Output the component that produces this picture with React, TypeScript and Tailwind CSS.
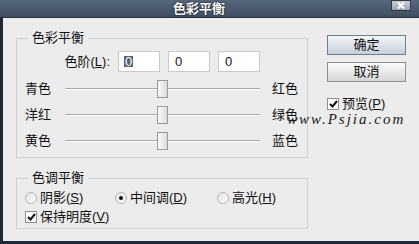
const SLIDERS = [
  { left: '青色', right: '红色' },
  { left: '洋红', right: '绿色' },
  { left: '黄色', right: '蓝色' },
]

function Check() {
  return (
    <span className="w-[12px] h-[12px] flex items-center justify-center bg-white border border-[#8f8f8f]">
      <svg width="9" height="8" viewBox="0 0 9 8">
        <polyline points="1,4 3.5,6.5 8,1" fill="none" stroke="#111" strokeWidth="2" />
      </svg>
    </span>
  )
}

function Radio({ on }: { on?: boolean }) {
  return (
    <span className="w-[12px] h-[12px] rounded-full flex items-center justify-center border border-[#b4b4b4] bg-[linear-gradient(135deg,#e2e2e2,#ffffff)]">
      {on && <span className="w-[4px] h-[4px] rounded-full bg-[#111]" />}
    </span>
  )
}

function Slider() {
  return (
    <div className="relative flex-1 h-[18px] flex items-center justify-center">
      <div className="absolute inset-x-0 top-[8px] h-[2px] border-t border-[#a9a9a9] border-b border-b-white" />
      <div className="relative w-[11px] h-[18px] border border-[#999] bg-[linear-gradient(90deg,#fafafa,#dcdcdc)]" />
    </div>
  )
}

function Field({ children, selected }: { children: string; selected?: boolean }) {
  return (
    <div className="w-[42px] h-[21px] bg-white border border-[#c9c9c9] flex items-center pl-[5px]">
      <span className={selected ? 'bg-[#55627a] text-white leading-[11px] px-[1px]' : 'px-[1px]'}>{children}</span>
    </div>
  )
}

export default function App() {
  return (
    <div className="w-[419px] h-[244px] flex flex-col overflow-hidden text-[13px] text-[#111] font-['Liberation_Sans','Noto_Sans_CJK_SC',sans-serif]">
      <div className="relative h-[18px] flex items-center pl-[173px] border-b border-[#26303d] bg-[linear-gradient(180deg,#56667b_0%,#4a596d_55%,#3f4d60_100%)]">
        <span className="text-white font-bold text-[13px] leading-[16px] [text-shadow:0_0_2px_#000]">色彩平衡</span>
        <div className="absolute right-[8px] top-0 w-[20px] h-[11px] border border-[#303a48] bg-[linear-gradient(180deg,#c9ced6,#9aa3ae)] flex items-center justify-center">
          <svg width="8" height="7" viewBox="0 0 8 7">
            <path d="M1 0.5 L7 6.5 M7 0.5 L1 6.5" stroke="#fff" strokeWidth="2" />
          </svg>
        </div>
      </div>

      <div className="relative flex-1 flex border-l-[3px] border-b-[3px] border-[#1f2836] bg-[#ececec]">
        <div className="pl-[13px] w-[305px]">
          <fieldset className="mt-[13px] border border-[#cfcfcf] pb-[3px]">
            <legend className="ml-[11px] px-[4px] leading-[14px]">色彩平衡</legend>
            <div className="mt-[6px] h-[21px] flex items-center pl-[38px]">
              <span className="w-[55px] text-right">
                色阶(<u>L</u>):
              </span>
              <div className="ml-[8px] flex gap-[8px]">
                <Field selected>0</Field>
                <Field>0</Field>
                <Field>0</Field>
              </div>
            </div>
            <div className="mt-[4px]">
              {SLIDERS.map((s) => (
                <div key={s.left} className="h-[26px] flex items-center pl-[8px] pr-[9px]">
                  <span className="w-[40px]">{s.left}</span>
                  <Slider />
                  <span className="ml-[12px] w-[26px]">{s.right}</span>
                </div>
              ))}
            </div>
          </fieldset>

          <fieldset className="mt-[13px] border border-[#cfcfcf] pb-[3px]">
            <legend className="ml-[11px] px-[4px] leading-[14px]">色调平衡</legend>
            <div className="mt-[5px] h-[16px] flex items-center pl-[8px]">
              <label className="w-[90px] flex items-center gap-[3px]">
                <Radio />
                <span>
                  阴影(<u>S</u>)
                </span>
              </label>
              <label className="w-[102px] flex items-center gap-[3px]">
                <Radio on />
                <span>
                  中间调(<u>D</u>)
                </span>
              </label>
              <label className="flex items-center gap-[3px]">
                <Radio />
                <span>
                  高光(<u>H</u>)
                </span>
              </label>
            </div>
            <div className="mt-[3px] h-[16px] flex items-center gap-[3px] pl-[8px]">
              <Check />
              <span>
                保持明度(<u>V</u>)
              </span>
            </div>
          </fieldset>
        </div>

        <div className="pl-[19px] pt-[17px] flex flex-col">
          <button className="w-[79px] h-[20px] border border-[#6f7d8f] bg-[linear-gradient(180deg,#f4f6f9,#c5cfdb)] leading-[18px]">
            确定
          </button>
          <button className="mt-[7px] w-[79px] h-[20px] border border-[#8d8d8d] bg-[linear-gradient(180deg,#fbfbfb,#d6d6d6)] leading-[18px]">
            取消
          </button>
          <div className="mt-[15px] h-[14px] flex items-center gap-[3px]">
            <Check />
            <span>
              预览(<u>P</u>)
            </span>
          </div>
        </div>

        <span className="absolute left-[284px] top-[93px] leading-[17px] text-[15px] italic tracking-[2px] text-[#1a1a1a] font-['Liberation_Serif',serif]">
          www.Psjia.com
        </span>
      </div>
    </div>
  )
}
